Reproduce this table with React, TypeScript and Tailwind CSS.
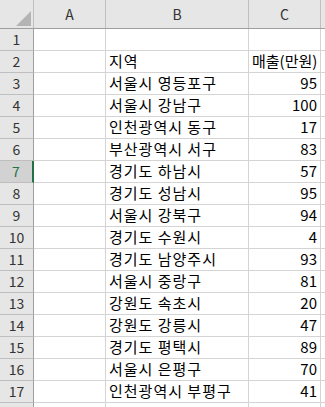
const rows: [string, number][] = [
  ["서울시 영등포구", 95],
  ["서울시 강남구", 100],
  ["인천광역시 동구", 17],
  ["부산광역시 서구", 83],
  ["경기도 하남시", 57],
  ["경기도 성남시", 95],
  ["서울시 강북구", 94],
  ["경기도 수원시", 4],
  ["경기도 남양주시", 93],
  ["서울시 중랑구", 81],
  ["강원도 속초시", 20],
  ["강원도 강릉시", 47],
  ["경기도 평택시", 89],
  ["서울시 은평구", 70],
  ["인천광역시 부평구", 41],
];

const font = { fontFamily: '"Noto Sans CJK KR", "Liberation Sans", sans-serif' };

const RowHead = ({ n, active }: { n?: number; active?: boolean }) => (
  <div
    className={
      "w-[34px] h-[22px] shrink-0 flex items-center justify-center text-[14px] border-b border-b-[#bfbfbf] " +
      (active
        ? "bg-[#d2d2d2] text-[#217346] border-r-2 border-r-[#217346]"
        : "bg-[#e6e6e6] text-[#333] border-r border-r-[#9e9e9e]")
    }
  >
    {n}
  </div>
);

const Cell = ({ w, children, right }: { w: string; children?: React.ReactNode; right?: boolean }) => (
  <div
    className={
      w +
      " h-[22px] shrink-0 border-r border-b border-[#d4d4d4] flex items-end pb-[1px] px-[3px] text-[15px] leading-[20px] text-black whitespace-nowrap overflow-visible " +
      (right ? "justify-end" : "justify-start")
    }
  >
    {children}
  </div>
);

const Row = ({ n, b, c, right }: { n?: number; b?: string; c?: React.ReactNode; right?: boolean }) => (
  <div className="flex">
    <RowHead n={n} active={n === 7} />
    <Cell w="w-[72px]" />
    <Cell w="w-[143px]">
      <span className="tracking-[1px]">{b}</span>
    </Cell>
    <Cell w="w-[72px]" right={right}>
      {c}
    </Cell>
    <Cell w="w-[10px]" />
  </div>
);

export default function App() {
  return (
    <div className="w-[325px] h-[407px] overflow-hidden bg-white" style={font}>
      <div className="flex h-[29px] border-b border-[#9e9e9e] bg-[#e6e6e6] text-[14px] text-[#333]">
        <div className="w-[34px] shrink-0 border-r border-[#bfbfbf] relative">
          <svg className="absolute left-[16px] top-[11px]" width="15" height="15" viewBox="0 0 15 15">
            <polygon points="15,0 15,15 0,15" fill="#b4b4b4" />
          </svg>
        </div>
        <div className="w-[72px] shrink-0 border-r border-[#bfbfbf] flex items-center justify-center">A</div>
        <div className="w-[143px] shrink-0 border-r border-[#bfbfbf] flex items-center justify-center">B</div>
        <div className="w-[72px] shrink-0 border-r border-[#bfbfbf] flex items-center justify-center">C</div>
        <div className="w-[10px] shrink-0" />
      </div>
      <Row n={1} />
      <Row n={2} b="지역" c="매출(만원)" />
      {rows.map(([b, c], i) => (
        <Row key={i} n={i + 3} b={b} c={c} right />
      ))}
      <Row />
    </div>
  );
}
